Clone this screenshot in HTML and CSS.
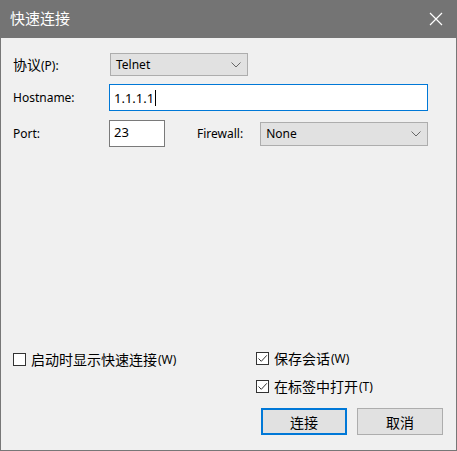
FILE: index.html
```html
<!DOCTYPE html>
<html>
<head>
<meta charset="utf-8">
<link rel="stylesheet" href="styles.css">
</head>
<body>
<div class="window">
  <div class="titlebar">
    <span class="title zh">快速连接</span>
    <svg class="close" width="14" height="14" viewBox="0 0 14 14"><path d="M1 1 L13 13 M13 1 L1 13" stroke="#fff" stroke-width="1.2" fill="none"/></svg>
  </div>
  <div class="content">
    <div class="row row1">
      <label class="lbl"><span class="zh">协议</span>(P):</label>
      <div class="select sel-proto"><span>Telnet</span><svg class="chev" width="10" height="6" viewBox="0 0 10 6"><path d="M0.5 0.5 L5 5 L9.5 0.5" stroke="#666" fill="none"/></svg></div>
    </div>
    <div class="row row2">
      <label class="lbl">Hostname:</label>
      <div class="input host"><span>1.1.1.1</span><span class="caret"></span></div>
    </div>
    <div class="row row3">
      <label class="lbl">Port:</label>
      <div class="input port">23</div>
      <label class="lbl fw">Firewall:</label>
      <div class="select sel-fw"><span>None</span><svg class="chev" width="10" height="6" viewBox="0 0 10 6"><path d="M0.5 0.5 L5 5 L9.5 0.5" stroke="#666" fill="none"/></svg></div>
    </div>
    <div class="spacer"></div>
    <div class="bottom">
      <div class="leftcol">
        <div class="check"><span class="box"></span><span class="zh">启动时显示快速连接</span><span class="key">(W)</span></div>
      </div>
      <div class="rightcol">
        <div class="check"><span class="box checked"><svg width="11" height="11" viewBox="0 0 11 11"><path d="M1.5 5.5 L4.3 8.3 L9.8 2.3" stroke="#333" stroke-width="1" fill="none"/></svg></span><span class="zh">保存会话</span><span class="key">(W)</span></div>
        <div class="check c2"><span class="box checked"><svg width="11" height="11" viewBox="0 0 11 11"><path d="M1.5 5.5 L4.3 8.3 L9.8 2.3" stroke="#333" stroke-width="1" fill="none"/></svg></span><span class="zh">在标签中打开</span><span class="key">(T)</span></div>
        <div class="buttons">
          <button class="btn primary"><span class="zh">连接</span></button>
          <button class="btn"><span class="zh">取消</span></button>
        </div>
      </div>
    </div>
  </div>
</div>
</body>
</html>
```

FILE: styles.css
```css
html, body {
  margin: 0;
  padding: 0;
  background: #f0f0f0;
}
body {
  font-family: "Noto Sans", "Noto Sans CJK SC", sans-serif;
  font-size: 12px;
  color: #000;
}
.zh {
  font-family: "Noto Sans CJK SC", sans-serif;
  font-size: 14px;
}
.window {
  width: 457px;
  height: 451px;
  box-sizing: border-box;
  border: 1px solid #777;
  border-top: none;
  display: flex;
  flex-direction: column;
  background: #f0f0f0;
}
.titlebar {
  height: 38px;
  margin: 0 -1px;
  background: #747474;
  display: flex;
  align-items: center;
  padding: 0 14px 0 10px;
  justify-content: space-between;
  flex-shrink: 0;
}
.title {
  color: #fff;
  font-size: 15px;
  line-height: 20px;
  margin-top: -2px;
}
.close {
  margin-top: -1px;
}
.content {
  flex: 1;
  display: flex;
  flex-direction: column;
  padding: 15px 12px 15px 12px;
}
.row {
  display: flex;
  align-items: center;
}
.row > * { flex-shrink: 0; }
.lbl {
  width: 96px;
  line-height: 16px;
}
.row1 { height: 23px; }
.row2 { height: 27px; margin-top: 8px; }
.row3 { height: 27px; margin-top: 9px; }
.select {
  box-sizing: border-box;
  height: 23px;
  background: #e1e1e1;
  border: 1px solid #adadad;
  display: flex;
  align-items: center;
  justify-content: space-between;
  padding: 0 6px 0 5px;
}
.sel-proto {
  width: 138px;
  margin-left: 1px;
}
.sel-fw {
  width: 168px;
  height: 24px;
}
.chev { margin-top: 1px; }
.input {
  box-sizing: border-box;
  height: 27px;
  background: #fff;
  border: 1px solid #7a7a7a;
  padding: 0 4px;
}
.host {
  width: 319px;
  border-color: #0078d7;
  display: flex;
  align-items: center;
  font-size: 13px;
}
.caret {
  display: inline-block;
  width: 1px;
  height: 16px;
  background: #000;
  margin-left: 1px;
}
.port {
  width: 56px;
  padding-top: 2px;
  font-size: 13px;
  line-height: 18px;
}
.fw {
  width: auto;
  margin-left: 32px;
  margin-right: 17px;
}
.spacer { flex: 1; }
.bottom {
  display: flex;
}
.leftcol {
  width: 243px;
  flex-shrink: 0;
}
.rightcol {
  display: flex;
  flex-direction: column;
  flex-shrink: 0;
}
.check {
  display: flex;
  align-items: center;
  height: 20px;
}
.check .key { font-size: 12px; margin-left: 1px; }
.c2 { margin-top: 8px; }
.box {
  width: 13px;
  height: 13px;
  box-sizing: border-box;
  border: 1px solid #333;
  background: #fff;
  margin-right: 5px;
  display: flex;
  align-items: center;
  justify-content: center;
}
.leftcol .check { margin-top: 1px; }
.buttons {
  display: flex;
  gap: 10px;
  margin-top: 12px;
  margin-left: 5px;
}
.btn {
  width: 86px;
  height: 27px;
  box-sizing: border-box;
  background: #e1e1e1;
  border: 1px solid #adadad;
  padding: 0;
  margin: 0;
  font-family: inherit;
  display: flex;
  align-items: center;
  justify-content: center;
}
.btn.primary {
  border: 2px solid #0078d7;
}
```
